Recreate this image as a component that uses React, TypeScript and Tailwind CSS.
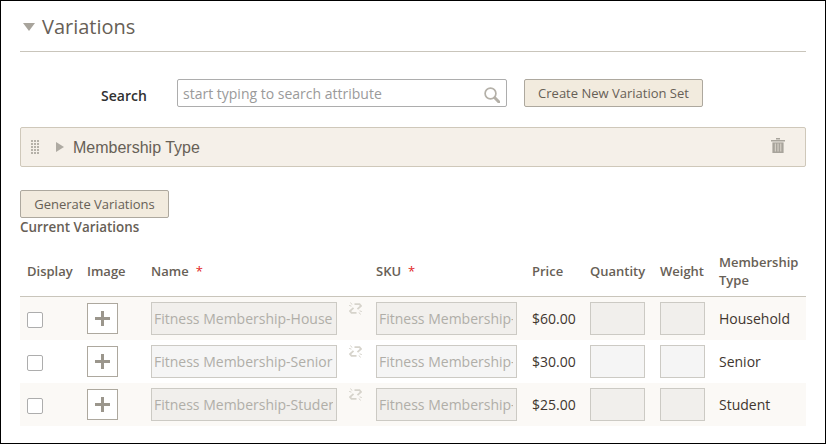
/**
 * Product variations panel: search, attribute row and current variations table.
 */

const columns = 'grid grid-cols-[60px_64px_225px_156px_58px_70px_59px_94px]';

const variations = [
    { name: 'Fitness Membership-Household', price: '$60.00', type: 'Household', striped: true },
    { name: 'Fitness Membership-Senior', price: '$30.00', type: 'Senior', striped: false },
    { name: 'Fitness Membership-Student', price: '$25.00', type: 'Student', striped: true },
];

function SearchIcon() {
    return (
        <svg viewBox="0 0 16 16" className="h-4 w-4 text-[#b4b0a8]" fill="none" stroke="currentColor">
            <circle cx="6.5" cy="6.5" r="5.4" strokeWidth="1.7" />
            <path d="M10.8 10.8 L15 15" strokeWidth="3" strokeLinecap="round" />
        </svg>
    );
}

function TrashIcon() {
    return (
        <svg viewBox="0 0 14 15" className="h-[15px] w-[14px]">
            <path d="M0 2h14v1.4H0zM5 0h4v1.4H5z" fill="#a8a49c" />
            <path d="M1.4 4.4h11.2V15H1.4z" fill="#a8a49c" />
            <path d="M3.8 5.6h1.1v8H3.8zM6.5 5.6h1.1v8H6.5zM9.2 5.6h1.1v8H9.2z" fill="#d9d4ca" />
        </svg>
    );
}

function GripIcon() {
    return (
        <div className="grid grid-cols-3 gap-px">
            {Array.from({ length: 15 }).map((_, i) => (
                <span key={i} className="h-[2px] w-[2px] bg-[#b5b1a9]" />
            ))}
        </div>
    );
}

function LinkIcon() {
    return (
        <svg viewBox="0 0 13 13" className="h-[13px] w-[13px]" fill="none" stroke="#d6d3cb">
            <path d="M5.5 2.2 H10.5 L12 4 L8.5 7.2" strokeWidth="1.8" />
            <path d="M7.5 10.8 H2.5 L1 9 L4.5 5.8" strokeWidth="1.8" />
            <path d="M1.5 0.5 L3 2.6M0.2 3.4 L2.4 4.2M11.5 12.5 L10 10.4M12.8 9.6 L10.6 8.8" strokeWidth="1" />
        </svg>
    );
}

function Plus() {
    return (
        <svg viewBox="0 0 15 15" className="h-[15px] w-[15px]" fill="#9b968c">
            <path d="M6 0h3v6h6v3H9v6H6V9H0V6h6z" />
        </svg>
    );
}

function HeadCell({ children, required }: { children: React.ReactNode; required?: boolean }) {
    return (
        <div className="flex items-center gap-[7px] pl-[7px] text-[13px] leading-[18px] font-semibold text-[#676056]">
            <span>{children}</span>
            {required && <span className="text-[#e22626] font-normal">*</span>}
        </div>
    );
}

const fieldClass =
    'h-[33px] rounded-none border border-[#cccac4] bg-black/[0.04] pl-[2px] pr-[3px] text-[14px] text-[#b0aea8] outline-none';

export default function App() {
    return (
        <div className="h-[444px] w-[826px] overflow-hidden border border-black bg-white px-[19px] font-['Open_Sans',sans-serif]">
            {/* Section title */}
            <div className="flex h-[51px] items-center gap-[7px] border-b border-[#c9c5bb] pt-[2px]">
                <span className="ml-[3px] h-0 w-0 border-x-[6px] border-t-[8px] border-x-transparent border-t-[#a8a49c]" />
                <h2 className="text-[20px] text-[#676056]">Variations</h2>
            </div>

            {/* Search row */}
            <div className="mt-[27px] flex items-center">
                <label className="ml-[81px] w-[76px] pt-[4px] text-[14px] font-semibold text-[#303030]">Search</label>
                <div className="flex h-[28px] w-[330px] items-center rounded-[2px] border border-[#adadad] pr-[6px]">
                    <input
                        placeholder="start typing to search attribute"
                        className="min-w-0 flex-1 bg-transparent pl-[5px] text-[14px] outline-none placeholder:text-[#9a9a9a]"
                    />
                    <span className="mt-[4px]"><SearchIcon /></span>
                </div>
                <button className="ml-[17px] h-[28px] w-[179px] rounded-[2px] border border-[#ada89e] bg-[#f2ebde] pt-[2px] text-[13px] text-[#676056]">
                    Create New Variation Set
                </button>
            </div>

            {/* Attribute */}
            <div className="mt-[20px] flex h-[40px] items-center rounded-[2px] border border-[#cfc8ba] bg-[#f5f0e9] pl-[10px] pr-[20px]">
                <GripIcon />
                <span className="ml-[17px] h-0 w-0 border-y-[5px] border-l-[8px] border-y-transparent border-l-[#aeaaa2]" />
                <span className="ml-[9px] pt-[1px] font-['Liberation_Sans',sans-serif] text-[16px] text-[#676056]">Membership Type</span>
                <span className="mb-[4px] ml-auto"><TrashIcon /></span>
            </div>

            <button className="mt-[23px] block h-[28px] w-[149px] rounded-[2px] border border-[#ada89e] bg-[#f2ebde] pt-[2px] text-[13px] text-[#676056]">
                Generate Variations
            </button>
            <div className="mt-[1px] text-[13.4px] leading-[17px] font-semibold text-[#676056]">Current Variations</div>

            {/* Variations table */}
            <div className={`${columns} mt-[10px] h-[51px] border-b border-[#c9c5bb]`}>
                <HeadCell>Display</HeadCell>
                <HeadCell>Image</HeadCell>
                <HeadCell required>Name</HeadCell>
                <HeadCell required>SKU</HeadCell>
                <HeadCell>Price</HeadCell>
                <HeadCell>Quantity</HeadCell>
                <HeadCell>Weight</HeadCell>
                <HeadCell>Membership Type</HeadCell>
            </div>

            {variations.map((row) => (
                <div key={row.type} className={`${columns} h-[43px] items-center ${row.striped ? 'bg-[#fbf9f6]' : 'bg-white'}`}>
                    <div className="pl-[7px] pt-[3px]">
                        <span className="block h-[16px] w-[16px] rounded-[2px] border border-[#adadad] bg-white" />
                    </div>
                    <div className="pl-[7px]">
                        <div className="flex h-[31px] w-[31px] items-center justify-center border border-[#ada89e] bg-white">
                            <Plus />
                        </div>
                    </div>
                    <div className="flex items-start pl-[7px]">
                        <input readOnly value={row.name} className={`${fieldClass} w-[186px]`} />
                        <span className="ml-[12px]"><LinkIcon /></span>
                    </div>
                    <div className="pl-[7px]">
                        <input readOnly value={row.name} className={`${fieldClass} w-[141px]`} />
                    </div>
                    <div className="pl-[7px] text-[14px] text-[#41362f]">{row.price}</div>
                    <div className="pl-[7px]">
                        <div className="h-[33px] w-[55px] border border-[#cccac4] bg-black/[0.04]" />
                    </div>
                    <div className="pl-[7px]">
                        <div className="h-[33px] w-[45px] border border-[#cccac4] bg-black/[0.04]" />
                    </div>
                    <div className="pl-[7px] text-[14px] text-[#41362f]">{row.type}</div>
                </div>
            ))}
        </div>
    );
}
